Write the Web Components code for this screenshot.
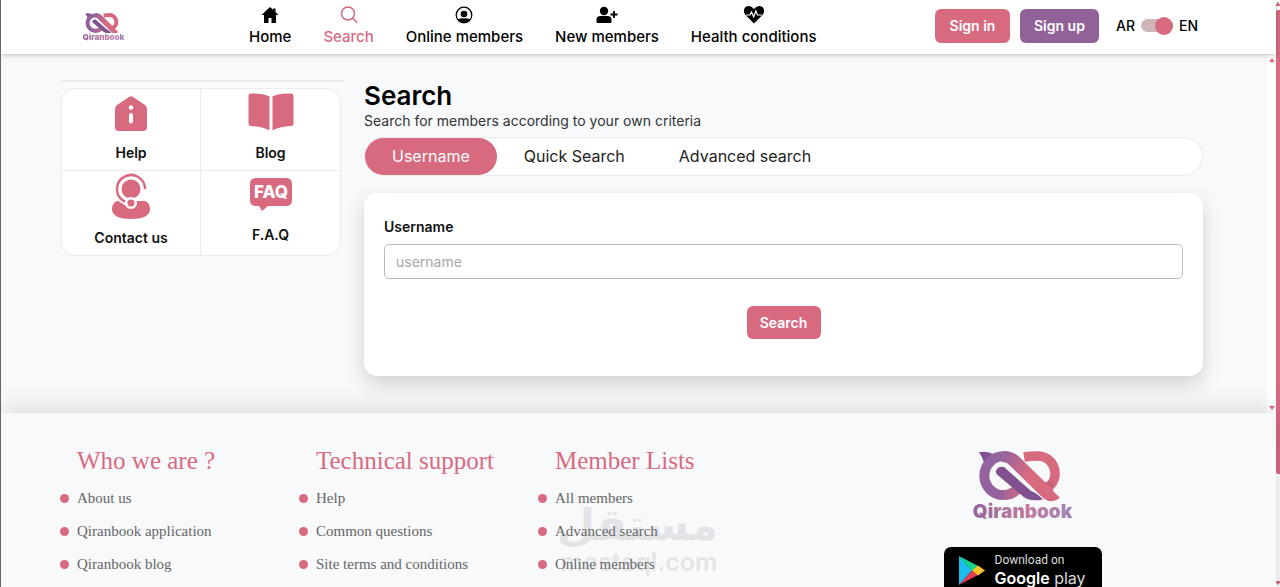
<!DOCTYPE html>
<html lang="en">
<head>
<meta charset="utf-8">
<meta name="viewport" content="width=device-width, initial-scale=1">
<title>Qiranbook - Search</title>
<style>
  :root {
    --pink: #d86a80;
    --purple: #906298;
    --page: #f7f9fb;
    --line: #e9ebed;
  }
  html, body { margin: 0; height: 100%; }
  body { overflow: hidden; background: var(--page); font-family: Inter, "Open Sans", sans-serif; font-size: 14px; color: #111; }
</style>
</head>
<body>
<qb-app></qb-app>
<script>
const define = (name, html) => {
  const template = document.createElement('template');
  template.innerHTML = '<style>*{box-sizing:border-box}</style>' + html;
  customElements.define(name, class extends HTMLElement {
    constructor() {
      super();
      this.attachShadow({ mode: 'open' }).append(template.content.cloneNode(true));
    }
  });
};

define('qb-logo', `
<style>
  :host { display: flex; flex-direction: column; align-items: center; width: var(--logo-width, 101px); }
  svg { display: block; width: 82%; margin-right: 7%; }
  span { font-size: var(--logo-text, 19px); line-height: var(--logo-line, 20px); font-weight: 900; color: #a274a6;
    background: linear-gradient(90deg, #95659d, #c27a9e 55%, #a184b4); -webkit-background-clip: text; background-clip: text; -webkit-text-fill-color: transparent; }
</style>
<svg viewBox="0 0 248 152" fill="none" aria-hidden="true">
  <defs>
    <linearGradient id="l" gradientUnits="userSpaceOnUse" x1="20" y1="20" x2="150" y2="80"><stop offset=".3" stop-color="#94639d"/><stop offset="1" stop-color="#d86a80"/></linearGradient>
    <linearGradient id="b" gradientUnits="userSpaceOnUse" x1="60" y1="0" x2="125" y2="0"><stop stop-color="#94639d"/><stop offset="1" stop-color="#cb6888"/></linearGradient>
  </defs>
  <path d="M2 4Q28-2 50 12L20 42Q14 18 2 4Z" fill="#80508f"/>
  <path d="M138 18Q156 15 178 15A52 52 0 0 1 213 106" stroke="#d86a80" stroke-width="29"/>
  <path d="M196 96L214 118L228 104L220 88Z" fill="#c9627a"/>
  <path d="M76 132A57 58 0 0 1 76 16Q98 15 113 29" stroke="#94639d" stroke-width="30"/>
  <path d="M74 132Q104 132 120 112" stroke="url(#b)" stroke-width="30"/>
  <path d="M72 1Q104-1 126 20L216 108Q230 128 246 140Q226 158 203 146Q195 141 187 133L96 44Q88 34 72 32Z" fill="url(#l)"/>
  <path d="M53 62Q58 44 78 48L159 120Q175 126 195 145Q157 153 137 138L56 70Z" fill="#80508f"/>
</svg>
<span>Qiranbook</span>
`);

define('qb-nav-item', `
<style>
  :host { display: block; }
  a { display: flex; flex-direction: column; align-items: center; gap: 2px; color: var(--item-color, #000); text-decoration: none; font-size: 15px; font-weight: 500; line-height: 20px; white-space: nowrap; }
</style>
<a href="#"><slot name="icon"></slot><slot></slot></a>
`);

define('qb-header', `
<style>
  :host { display: flex; align-items: center; height: 54px; background: #fff; padding: 0 78px 0 82px; box-shadow: 0 1px 5px rgba(0,0,0,.25); position: relative; z-index: 2; }
  qb-logo { --logo-width: 41px; --logo-text: 8px; --logo-line: 8px; flex: none; }
  nav { display: flex; gap: 32px; margin-left: 125px; align-items: center; padding-bottom: 3px; }
  qb-nav-item svg { width: 22px; height: 20px; display: block; }
  .on { --item-color: var(--pink); }
  .actions { margin-left: auto; display: flex; align-items: center; gap: 10px; padding-bottom: 3px; }
  button { font: 600 14px Inter, sans-serif; color: #fff; background: var(--pink); border: 0; border-radius: 6px; padding: 0; height: 34px; width: 75px; }
  .up { background: var(--purple); width: 79px; }
  label { display: flex; align-items: center; gap: 6px; margin-left: 7px; font-weight: 500; color: #000; }
  input { appearance: none; margin: 0; width: 32px; height: 13px; border-radius: 7px; background: #cbb5b7; display: flex; justify-content: flex-end; align-items: center; }
  input::before { content: ""; width: 18px; height: 18px; border-radius: 50%; background: var(--pink); flex: none; }
</style>
<qb-logo></qb-logo>
<nav aria-label="Main">
  <qb-nav-item>
    <svg slot="icon" viewBox="0 0 22 20"><path d="M11 2L2.500 10H5v8h4.500v-5h3v5H17v-8h2.500L16.500 7V3.500H14v1.200z"/></svg>Home</qb-nav-item>
  <qb-nav-item class="on">
    <svg slot="icon" viewBox="0 0 22 20" fill="none" stroke="#d86a80" stroke-width="1.500" stroke-linecap="round"><circle cx="10" cy="8.500" r="6.500"/><path d="M14.800 13.300l3.800 3.800"/></svg>Search</qb-nav-item>
  <qb-nav-item>
    <svg slot="icon" viewBox="0 0 22 20"><circle cx="11" cy="10" r="7.800" fill="none" stroke="#000" stroke-width="1.300"/><circle cx="11" cy="9" r="3.300"/><path d="M5 14.500Q8 12.500 11 13.500Q14 12.500 17 14.500Q14.500 18 11 18T5 14.500z"/></svg>Online members</qb-nav-item>
  <qb-nav-item>
    <svg slot="icon" viewBox="0 0 22 20"><circle cx="8" cy="6" r="4.200"/><path d="M.5 17v-2q0-4 4-4h7q4 0 4 4v2q0 1-1 1h-13q-1 0-1-1z"/><path d="M18 6v7M14.500 9.500h7" stroke="#000" stroke-width="1.800"/></svg>New members</qb-nav-item>
  <qb-nav-item>
    <svg slot="icon" viewBox="0 0 22 20"><path d="M11 18.500L2 9.500Q-.5 5 2.500 2Q7-1 11 4Q15-1 19.500 2Q22.500 5 20 9.500z"/><path d="M3 10h4l1.500-3 2.200 5 2.200-6 1.600 4H19" fill="none" stroke="#fff" stroke-width="1.200"/></svg>Health conditions</qb-nav-item>
</nav>
<div class="actions">
  <button type="button">Sign in</button>
  <button type="button" class="up">Sign up</button>
  <label for="lang">AR <input id="lang" type="checkbox" role="switch" checked> EN</label>
</div>
`);

define('qb-side-link', `
<style>
  :host { display: block; border: 0 solid var(--line); }
  a { display: flex; flex-direction: column; align-items: center; color: #111; text-decoration: none; font-weight: 600; line-height: 20px; }
  ::slotted(svg) { display: block; height: 48px; width: 48px; overflow: visible; }
</style>
<a href="#"><slot name="icon"></slot><slot></slot></a>
`);

define('qb-sidebar', `
<style>
  :host { display: block; padding-top: 26px; }
  hr { border: 0; border-top: 2px solid var(--line); margin: 0 0 6px; }
  nav { display: grid; grid-template-columns: 1fr 1fr; grid-template-rows: 82px 84px; margin-right: 3px; background: #fff; border: 1px solid var(--line); border-radius: 14px; overflow: hidden; fill: var(--pink); }
  qb-side-link { padding-top: 6px; }
  qb-side-link:nth-child(odd) { border-right-width: 1px; }
  qb-side-link:nth-child(-n+2) { border-bottom-width: 1px; }
  .tall { padding-top: 4px; }
  .tall span { padding-top: 5px; }
</style>
<hr>
<nav aria-label="Help">
  <qb-side-link>
    <svg slot="icon" viewBox="0 0 48 48"><path d="M22 2Q24 .7 26 2l12 8q2 1.500 2 4v18q0 4-4 4H12q-4 0-4-4V14q0-2.500 2-4z"/><circle cx="24" cy="12.500" r="2.200" fill="#fff"/><rect x="22" y="18" width="4" height="10.500" rx="2" fill="#fff"/></svg>Help</qb-side-link>
  <qb-side-link>
    <svg slot="icon" viewBox="0 0 48 48"><path d="M22.500 1.500v34Q16 31.500 4 31q-2.500 0-2.500-2.500V1q0-2.500 2.500-2.500Q16-2 22.500 1.500zM25.500 1.500v34Q32 31.500 44 31q2.500 0 2.500-2.500V1q0-2.500-2.500-2.500Q32-2 25.500 1.500z"/></svg>Blog</qb-side-link>
  <qb-side-link class="tall">
    <svg slot="icon" viewBox="0 0 48 48"><path d="M10 26h28q5 2 5 8 0 10-19 10T5 34q0-6 5-8z"/><circle cx="24" cy="14" r="12.500" fill="#fff"/><path d="M14 23l10 6" stroke="#fff" stroke-width="8"/><circle cx="24" cy="14" r="9.500"/><path d="M38 14A14 14 0 1 0 16 25.500l6 3" fill="none" stroke="#d86a80" stroke-width="2.500"/><circle cx="24" cy="28" r="4.800" stroke="#fff" stroke-width="2.500"/></svg><span>Contact us</span></qb-side-link>
  <qb-side-link>
    <svg slot="icon" viewBox="0 0 48 48"><path d="M9 1h30q6 0 6 6v16q0 6-6 6H21l-6 5-3-5H9q-6 0-6-6V7q0-6 6-6z"/><text x="24" y="21" text-anchor="middle" font-family="Inter,sans-serif" font-weight="800" font-size="17" fill="#fff">FAQ</text></svg>F.A.Q</qb-side-link>
</nav>
`);

define('qb-search', `
<style>
  :host { display: block; padding-top: 26px; }
  h1 { margin: 0; font-size: 26px; line-height: 32px; font-weight: 600; color: #000; }
  p { margin: 0 0 7px; line-height: 18px; color: #333; }
  .tabs { display: flex; background: #fff; border: 1px solid var(--line); border-radius: 20px; height: 39px; }
  .tabs button { font: 400 16px Inter, sans-serif; color: #222; background: none; border: 0; border-radius: 20px; padding: 0 27px 1px; }
  .tabs button[aria-selected=true] { color: #fff; background: var(--pink); }
  form { margin-top: 17px; background: #fff; border-radius: 14px; box-shadow: 0 8px 20px rgba(0,0,0,.16); height: 183px; padding: 24px 20px 0; display: flex; flex-direction: column; }
  label { font-weight: 600; line-height: 20px; margin-bottom: 7px; }
  input { height: 35px; border: 1px solid #bcbcbc; border-radius: 5px; padding: 0 11px; font: 400 14px Inter, sans-serif; color: #222; background: #fff; width: 100%; }
  input::placeholder { color: #a8a8a8; }
  form button { align-self: center; margin-top: 27px; width: 74px; height: 33px; border: 0; border-radius: 6px; background: var(--pink); color: #fff; font: 600 14px Inter, sans-serif; padding: 0; }
</style>
<h1>Search</h1>
<p>Search for members according to your own criteria</p>
<div class="tabs" role="tablist">
  <button role="tab" type="button" aria-selected="true">Username</button>
  <button role="tab" type="button" aria-selected="false">Quick Search</button>
  <button role="tab" type="button" aria-selected="false">Advanced search</button>
</div>
<form>
  <label for="username">Username</label>
  <input id="username" type="text" placeholder="username">
  <button type="button">Search</button>
</form>
`);

define('qb-footer-list', `
<style>
  :host { display: block; font-family: "Liberation Serif", serif; }
  h2 { margin: 0 0 5px; padding-left: 17px; font-size: 25px; line-height: 32px; font-weight: 400; color: var(--pink); white-space: nowrap; }
  ::slotted(a) { display: flex; align-items: center; gap: 8px; font-size: 15px; line-height: 33px; color: #666; text-decoration: none; white-space: nowrap; }
</style>
<h2><slot name="title"></slot></h2>
<slot></slot>
`);

define('qb-store-badge', `
<style>
  :host { display: block; }
  a { display: flex; gap: 10px; width: 158px; height: 52px; padding: 6px 0 0 14px; border-radius: 7px; background: #000; color: #ddd; text-decoration: none; font-family: Roboto, sans-serif; }
  svg { width: 27px; height: 32px; margin-top: 2px; flex: none; }
  span { display: block; white-space: nowrap; }
  .small { font-size: 12px; line-height: 14px; }
  .big { font-family: Inter, sans-serif; font-size: 16px; line-height: 22px; }
  b { font-weight: 600; color: #fff; }
</style>
<a href="#">
  <svg viewBox="0 0 27 32" aria-hidden="true"><path d="M1 1v29l13-14.500z" fill="#19bdf0"/><path d="M1 1l19 10-6 5z" fill="#16d38a"/><path d="M1 30l19-10-6-4.500z" fill="#e43b55"/><path d="M20 10.500l7 5-7 5-6-5z" fill="#fbc12d"/></svg>
  <div><span class="small">Download on</span><span class="big"><b>Google</b> play</span></div>
</a>
`);

define('qb-footer', `
<style>
  :host { display: grid; grid-template-columns: repeat(3, minmax(0, 239px)) 1fr; background: var(--page); padding: 32px 8px 20px 59px; box-shadow: 0 0 28px rgba(0,0,0,.17); position: relative; }
  a::before { content: ""; width: 9px; height: 9px; border-radius: 50%; background: var(--pink); flex: none; }
  .brand { display: flex; flex-direction: column; align-items: center; gap: 25px; padding-top: 6px; }
</style>
<qb-footer-list><span slot="title">Who we are ?</span><a href="#">About us</a><a href="#">Qiranbook application</a><a href="#">Qiranbook blog</a></qb-footer-list>
<qb-footer-list><span slot="title">Technical support</span><a href="#">Help</a><a href="#">Common questions</a><a href="#">Site terms and conditions</a></qb-footer-list>
<qb-footer-list><span slot="title">Member Lists</span><a href="#">All members</a><a href="#">Advanced search</a><a href="#">Online members</a></qb-footer-list>
<div class="brand"><qb-logo></qb-logo><qb-store-badge></qb-store-badge></div>
`);

define('qb-watermark', `
<style>
  :host { position: absolute; left: 559px; top: 501px; width: 158px; color: rgba(120,120,125,.17); text-align: center; pointer-events: none; z-index: 3; }
  div { white-space: nowrap; }
  .ar { font: 700 44px/48px "DejaVu Sans", sans-serif; }
  .en { font: 600 25px/26px Inter, sans-serif; }
</style>
<div class="ar" lang="ar" dir="rtl">مستقل</div>
<div class="en">mostaql.com</div>
`);

define('qb-scroll-rail', `
<style>
  :host { display: flex; flex-direction: column; align-items: center; background: #fff; }
  i { border: 3px solid transparent; border-bottom: 4px solid var(--pink); border-top: 0; flex: none; }
  i.down { border-bottom: 0; border-top: 4px solid var(--pink); }
  div { flex: 1; width: 100%; padding: 4px 0; }
</style>
<i></i><div><slot></slot></div><i class="down"></i>
`);

define('qb-app', `
<style>
  :host { display: flex; position: relative; height: 100%; overflow: hidden; border-left: 1px solid #666; }
  .page { flex: 1; min-width: 0; }
  .view { display: flex; }
  main { flex: 1; min-width: 0; display: grid; grid-template-columns: 283px minmax(0, 1fr); gap: 20px; padding: 0 64px 37px 60px; }
  .inner { width: 9px; padding: 4px 0 3px; }
  .outer { width: 4px; padding: 2px 0; overflow: hidden; }
  .thumb { display: block; height: 464px; border-radius: 2px 0 0 2px; background: var(--pink); }
</style>
<div class="page">
  <qb-header></qb-header>
  <div class="view">
    <main><qb-sidebar></qb-sidebar><qb-search></qb-search></main>
    <qb-scroll-rail class="inner"></qb-scroll-rail>
  </div>
  <qb-footer></qb-footer>
</div>
<qb-scroll-rail class="outer"><span class="thumb"></span></qb-scroll-rail>
<qb-watermark></qb-watermark>
`);
</script>
</body>
</html>
